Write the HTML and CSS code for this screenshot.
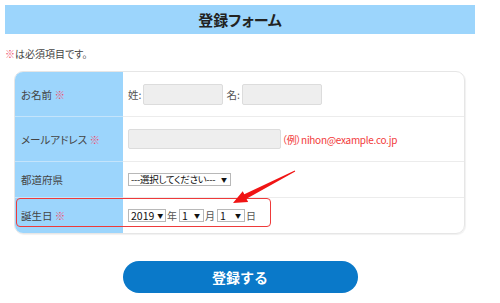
FILE: index.html
```html
<!DOCTYPE html>
<html lang="ja">
<head>
<meta charset="utf-8">
<title>登録フォーム</title>
<link rel="stylesheet" href="styles.css">
</head>
<body>
<div class="page">
  <h1 class="header">登録フォーム</h1>
  <p class="note"><span class="req">※</span>は必須項目です。</p>
  <div class="form-table">
    <div class="label"><span>お名前 <span class="req">※</span></span></div>
    <div class="value">
      <span class="cap">姓:</span><span class="input short"></span>
      <span class="cap gap">名:</span><span class="input short"></span>
    </div>
    <div class="label"><span>メールアドレス <span class="req">※</span></span></div>
    <div class="value">
      <span class="input email"></span><span class="example">（例）nihon@example.co.jp</span>
    </div>
    <div class="label"><span>都道府県</span></div>
    <div class="value">
      <span class="select pref"><span class="sel-text">---選択してください---</span><span class="arrow">▼</span></span>
    </div>
    <div class="label last"><span>誕生日 <span class="req">※</span></span></div>
    <div class="value last">
      <span class="select year"><span class="sel-text">2019</span><span class="arrow">▼</span></span><span class="unit">年</span>
      <span class="select month"><span class="sel-text">1</span><span class="arrow">▼</span></span><span class="unit">月</span>
      <span class="select day"><span class="sel-text">1</span><span class="arrow">▼</span></span><span class="unit">日</span>
    </div>
  </div>
  <div class="actions">
    <button class="submit" type="button">登録する</button>
  </div>
</div>
<div class="highlight"></div>
<svg class="pointer" viewBox="0 0 500 303" width="500" height="303" aria-hidden="true">
  <polygon fill="#f01414" points="233,203 242.7,191.3 244.3,194.3 294.8,170.6 295.2,171.4 246.5,198.8 248.1,201.9"/>
</svg>
</body>
</html>
```
FILE: styles.css
```css
html, body {
  margin: 0;
  padding: 0;
  background: #fff;
}
body {
  font-family: "Noto Sans CJK JP", "Noto Sans", sans-serif;
  font-feature-settings: "palt";
  color: #444;
  position: relative;
  width: 500px;
  height: 303px;
  overflow: hidden;
}
.page {
  width: 470px;
  padding: 5px 25px 0 5px;
}
.header {
  margin: 0;
  height: 29px;
  background: #9cd5fc;
  display: flex;
  align-items: center;
  justify-content: center;
  font-size: 15px;
  font-weight: bold;
  color: #222;
}
.note {
  margin: 14px 0 0 0;
  font-size: 10px;
  line-height: 12px;
  color: #444;
}
.req {
  color: #f0506e;
}
.form-table {
  margin: 11px 0 0 9px;
  width: 451px;
  box-sizing: border-box;
  border: 1px solid #e6e6e6;
  border-radius: 9px;
  overflow: hidden;
  display: grid;
  grid-template-columns: 108px 1fr;
  grid-template-rows: 45px 45px 36px 35px;
  box-shadow: 1px 1px 1px rgba(0,0,0,0.06);
}
.label {
  background: #9cd5fc;
  display: flex;
  align-items: center;
  padding-left: 6px;
  font-size: 10.5px;
  color: #444;
  border-bottom: 1px solid #c4e4fb;
  white-space: pre;
}
.value {
  display: flex;
  align-items: center;
  padding-left: 5px;
  font-size: 10.5px;
  color: #555;
  border-bottom: 1px solid #ececec;
}
.last {
  border-bottom: none;
}
.cap {
  margin-right: 2px;
}
.cap.gap {
  margin-left: 3px;
}
.input {
  display: inline-block;
  box-sizing: border-box;
  height: 21px;
  background: #eeeeee;
  border: 1px solid #dcdcdc;
  border-radius: 2px;
}
.input.short {
  width: 80px;
}
.input.email {
  width: 153px;
  height: 20px;
}
.example {
  margin-left: 1px;
  color: #f23a3a;
  font-size: 10px;
  letter-spacing: -0.3px;
}
.select {
  display: inline-flex;
  align-items: center;
  justify-content: space-between;
  box-sizing: border-box;
  height: 13px;
  padding: 0 3px 0 2px;
  background: #fff;
  border: 1px solid #b8b8b8;
  color: #111;
  font-size: 10.5px;
  line-height: 11px;
}
.sel-text {
  white-space: nowrap;
}
.select.pref .sel-text {
  font-size: 9.5px;
  letter-spacing: -0.3px;
}
.arrow {
  font-size: 6px;
  margin-left: 3px;
}
.select.pref { width: 103px; }
.select.year { width: 38px; }
.select.month { width: 25px; }
.select.day { width: 28px; }
.unit {
  margin: 0 2px 0 1px;
  color: #555;
  font-size: 10px;
}
.actions {
  display: flex;
  justify-content: center;
  margin-top: 27px;
}
.submit {
  width: 235px;
  height: 32px;
  border: none;
  border-radius: 16px;
  background: #0a79c9;
  color: #fff;
  font-family: "Noto Sans CJK JP", sans-serif;
  font-size: 14px;
  font-weight: bold;
  padding: 0;
}
.highlight {
  position: absolute;
  left: 16px;
  top: 198px;
  width: 255px;
  height: 29px;
  box-sizing: border-box;
  border: 1.5px solid #ee3a3a;
  border-radius: 4px;
  pointer-events: none;
}
.pointer {
  position: absolute;
  left: 0;
  top: 0;
  pointer-events: none;
}
```
